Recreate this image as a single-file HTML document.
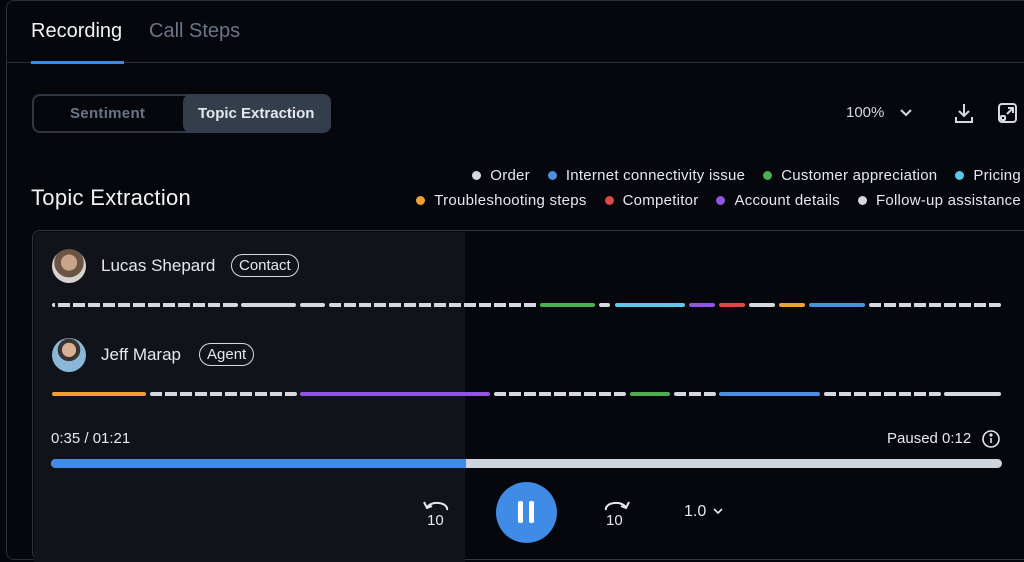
<!DOCTYPE html><html><head><style>
*{margin:0;padding:0;box-sizing:border-box}
body{width:1024px;height:553px;background:#06070c;font-family:"Liberation Sans",sans-serif;position:relative;overflow:hidden;color:#e6e8ee}
.a{position:absolute}
.frame{left:6px;top:0;width:1030px;height:560px;border:1px solid #2a2f3a;border-radius:8px}
.d{position:absolute;height:4px;border-radius:2px;background:repeating-linear-gradient(90deg,#d5d9e1 0 12px,transparent 12px 15px)}
.s{position:absolute;height:4px;border-radius:2px}
.lg{font-size:15px;color:#e6e8ee;white-space:nowrap;letter-spacing:0.25px;text-align:right}
.dot{display:inline-block;width:9px;height:9px;border-radius:50%;margin:0 9px 0 18px;vertical-align:0}
.pill{border:1.5px solid #d5d9e1;border-radius:12px;font-size:15px;padding:2px 7px;color:#e6e8ee}
</style></head><body>
<div class="a frame"></div>
<div class="a" style="left:31px;top:20px;font-size:20px;color:#f2f3f6">Recording</div>
<div class="a" style="left:149px;top:20px;font-size:20px;color:#6b7587">Call Steps</div>
<div class="a" style="left:7px;top:62px;width:1017px;height:1px;background:#2a2f3a"></div>
<div class="a" style="left:31px;top:61px;width:93px;height:3px;background:#3c8ce6"></div>
<div class="a" style="left:32px;top:94px;width:299px;height:39px;border:2px solid #2f3744;border-radius:8px"></div>
<div class="a" style="left:183px;top:94px;width:148px;height:39px;background:#343d4b;border-radius:8px"></div>
<div class="a" style="left:70px;top:105px;font-size:15px;color:#6b7587;font-weight:bold;letter-spacing:0.3px">Sentiment</div>
<div class="a" style="left:198px;top:105px;font-size:15px;color:#e6e8ee;font-weight:bold">Topic Extraction</div>
<div class="a" style="left:846px;top:104px;font-size:15px;color:#d5d9e1">100%</div>
<svg class="a" style="left:898px;top:106px" width="16" height="12"><path d="M3 4l5 5 5-5" stroke="#d5d9e1" stroke-width="2" fill="none"/></svg>
<svg class="a" style="left:953px;top:101px" width="22" height="24" fill="none" stroke="#d5d9e1" stroke-width="2"><path d="M11 3v12M6 10l5 5 5-5M3 16v5h16v-5"/></svg>
<svg class="a" style="left:997px;top:101px" width="22" height="24" fill="none" stroke="#d5d9e1" stroke-width="2"><rect x="2" y="3" width="17" height="18" rx="3"/><path d="M10 13l6-6M11 7h5v5"/><rect x="4" y="15" width="4" height="4" rx="1"/></svg>
<div class="a" style="left:31px;top:185px;font-size:22px;color:#f2f3f6;letter-spacing:0.3px">Topic Extraction</div>
<div class="a lg" style="right:3px;top:167px"><span class="dot" style="background:#d5d9e1"></span>Order<span class="dot" style="background:#4a90e2"></span>Internet connectivity issue<span class="dot" style="background:#4caf50"></span>Customer appreciation<span class="dot" style="background:#5bc8e8"></span>Pricing</div>
<div class="a lg" style="right:3px;top:192px"><span class="dot" style="background:#f0a030"></span>Troubleshooting steps<span class="dot" style="background:#e04848"></span>Competitor<span class="dot" style="background:#9055e0"></span>Account details<span class="dot" style="background:#d5d9e1"></span>Follow-up assistance</div>
<div class="a" style="left:32px;top:230px;width:1000px;height:330px;border:1.5px solid #2f3744;border-radius:8px;background:#06070c"></div>
<div class="a" style="left:34px;top:232px;width:431px;height:330px;background:#10131a;border-radius:6px 0 0 0"></div>
<div class="a" style="left:52px;top:249px;width:34px;height:34px;border-radius:50%;background:radial-gradient(circle at 50% 40%,#c8a58a 0 30%,#6b5444 31% 55%,#d6d2cc 56%)"></div>
<div class="a" style="left:101px;top:256px;font-size:17px;color:#e6e8ee">Lucas Shepard</div>
<div class="a pill" style="left:231px;top:254px">Contact</div>
<div class="a" style="left:52px;top:338px;width:34px;height:34px;border-radius:50%;background:radial-gradient(circle at 50% 35%,#d9b093 0 25%,#3a3532 26% 40%,#8bb8d8 41%)"></div>
<div class="a" style="left:101px;top:345px;font-size:17px;color:#e6e8ee">Jeff Marap</div>
<div class="a pill" style="left:199px;top:343px">Agent</div>
<!-- row1 -->
<div class="d" style="left:52px;top:303px;width:186px;background-position:-9px 0"></div>
<div class="s" style="left:241px;top:303px;width:55px;background:#d5d9e1"></div>
<div class="s" style="left:300px;top:303px;width:25px;background:#d5d9e1"></div>
<div class="d" style="left:329px;top:303px;width:208px"></div>
<div class="s" style="left:540px;top:303px;width:55px;background:#4caf50"></div>
<div class="s" style="left:599px;top:303px;width:11px;background:#d5d9e1"></div>
<div class="s" style="left:615px;top:303px;width:70px;background:#5bc8e8"></div>
<div class="s" style="left:689px;top:303px;width:26px;background:#9055e0"></div>
<div class="s" style="left:719px;top:303px;width:26px;background:#e04848"></div>
<div class="s" style="left:749px;top:303px;width:26px;background:#d5d9e1"></div>
<div class="s" style="left:779px;top:303px;width:26px;background:#f0a030"></div>
<div class="s" style="left:809px;top:303px;width:56px;background:#4a90e2"></div>
<div class="d" style="left:869px;top:303px;width:132px"></div>
<!-- row2 -->
<div class="s" style="left:52px;top:392px;width:94px;background:#f0a030"></div>
<div class="d" style="left:150px;top:392px;width:147px"></div>
<div class="s" style="left:300px;top:392px;width:190px;background:#9055e0"></div>
<div class="d" style="left:494px;top:392px;width:132px"></div>
<div class="s" style="left:630px;top:392px;width:40px;background:#4caf50"></div>
<div class="d" style="left:674px;top:392px;width:42px"></div>
<div class="s" style="left:719px;top:392px;width:101px;background:#4a90e2"></div>
<div class="d" style="left:824px;top:392px;width:117px"></div>
<div class="s" style="left:944px;top:392px;width:57px;background:#d5d9e1"></div>
<div class="a" style="left:51px;top:430px;font-size:15px;color:#e6e8ee">0:35 / 01:21</div>
<div class="a" style="left:887px;top:430px;font-size:15px;color:#e6e8ee">Paused 0:12</div>
<svg class="a" style="left:981px;top:429px" width="20" height="20" fill="none" stroke="#e6e8ee" stroke-width="1.6"><circle cx="10" cy="10" r="8"/><path d="M10 9v5"/><circle cx="10" cy="6" r=".8" fill="#e6e8ee"/></svg>
<div class="a" style="left:51px;top:459px;width:951px;height:9px;border-radius:5px;background:#cfd5df"></div>
<div class="a" style="left:51px;top:459px;width:415px;height:9px;border-radius:5px 0 0 5px;background:#3f8be6"></div>
<svg class="a" style="left:420px;top:496px" width="32" height="32" fill="none" stroke="#e6e8ee" stroke-width="2"><path d="M7 12a10 6 0 0 1 20 2"/><path d="M4 6l3 6 5-2"/><text x="7" y="29" font-size="15" fill="#e6e8ee" stroke="none" font-family="Liberation Sans">10</text></svg>
<div class="a" style="left:496px;top:482px;width:61px;height:61px;border-radius:50%;background:#3f8be6"></div>
<div class="a" style="left:518px;top:501px;width:5px;height:22px;background:#fff;border-radius:2px"></div>
<div class="a" style="left:529px;top:501px;width:5px;height:22px;background:#fff;border-radius:2px"></div>
<svg class="a" style="left:601px;top:496px" width="32" height="32" fill="none" stroke="#e6e8ee" stroke-width="2"><path d="M5 14a10 6 0 0 1 20-2"/><path d="M20 10l5 2 3-6"/><text x="5" y="29" font-size="15" fill="#e6e8ee" stroke="none" font-family="Liberation Sans">10</text></svg>
<div class="a" style="left:684px;top:503px;font-size:16px;color:#e6e8ee">1.0</div>
<svg class="a" style="left:711px;top:506px" width="14" height="10"><path d="M3 3l4 4 4-4" stroke="#e6e8ee" stroke-width="1.6" fill="none"/></svg>
</body></html>
